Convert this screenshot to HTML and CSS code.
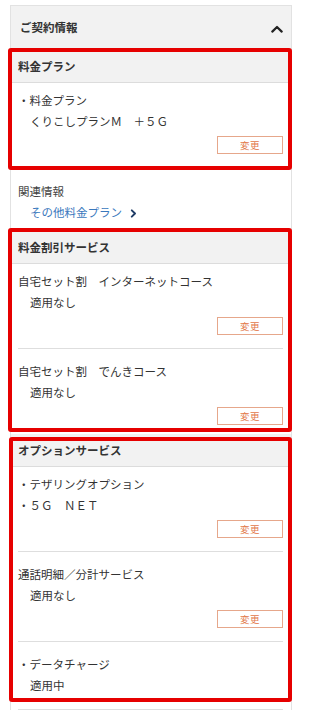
FILE: index.html
```html
<!DOCTYPE html>
<html lang="ja">
<head>
<meta charset="utf-8">
<meta name="viewport" content="width=301">
<title>ご契約情報</title>
<link rel="stylesheet" href="styles.css">
</head>
<body>
<div class="wrap">
  <div class="card">
    <div class="card-head">
      <span class="card-title">ご契約情報</span>
      <svg class="chev-up" width="12" height="8" viewBox="0 0 12 8"><path d="M1.3 6.6 L6 2 L10.7 6.6" fill="none" stroke="#222" stroke-width="2.2" stroke-linecap="round" stroke-linejoin="round"/></svg>
    </div>

    <div class="sec-head">料金プラン</div>
    <div class="item last">
      <p class="line">・料金プラン</p>
      <p class="line indent">くりこしプランＭ　＋５Ｇ</p>
      <div class="btn-row"><span class="btn">変更</span></div>
    </div>

    <div class="related">
      <p class="line rel-title">関連情報</p>
      <p class="line indent link">その他料金プラン<svg class="chev-r" width="7" height="9" viewBox="0 0 7 9"><path d="M1.8 1.3 L5 4.5 L1.8 7.7" fill="none" stroke="#1f3c66" stroke-width="1.9" stroke-linecap="round" stroke-linejoin="round"/></svg></p>
    </div>

    <div class="sec-head">料金割引サービス</div>
    <div class="item">
      <p class="line">自宅セット割　インターネットコース</p>
      <p class="line indent">適用なし</p>
      <div class="btn-row"><span class="btn">変更</span></div>
    </div>
    <div class="item last">
      <p class="line">自宅セット割　でんきコース</p>
      <p class="line indent">適用なし</p>
      <div class="btn-row"><span class="btn">変更</span></div>
    </div>

    <div class="sec-head">オプションサービス</div>
    <div class="item">
      <p class="line">・テザリングオプション</p>
      <p class="line">・５Ｇ　ＮＥＴ</p>
      <div class="btn-row"><span class="btn">変更</span></div>
    </div>
    <div class="item">
      <p class="line">通話明細／分計サービス</p>
      <p class="line indent">適用なし</p>
      <div class="btn-row"><span class="btn">変更</span></div>
    </div>
    <div class="item">
      <p class="line">・データチャージ</p>
      <p class="line indent">適用中</p>
    </div>
    <div class="item"></div>
  </div>

  <div class="mark mark-1"></div>
  <div class="mark mark-2"></div>
  <div class="mark mark-3"></div>
</div>
</body>
</html>
```

FILE: styles.css
```css
html, body {
  margin: 0;
  padding: 0;
  background: #ffffff;
}

body {
  font-family: "Noto Sans CJK JP", "Noto Sans", sans-serif;
  color: #333333;
  font-size: 11.5px;
  overflow: hidden;
}

.wrap {
  position: relative;
  width: 301px;
  padding-top: 5px;
  height: 705px;
  overflow: hidden;
}

.card {
  margin: 0 9px 0 10px;
  border: 1px solid #e2e2e2;
  border-bottom: none;
  background: #ffffff;
}

.card-head {
  display: flex;
  align-items: center;
  justify-content: space-between;
  background: #f2f2f2;
  padding: 13px 8px 15px 9px;
  line-height: 16px;
}

.card-title {
  font-weight: bold;
  font-size: 11.5px;
  color: #333333;
}

.chev-up {
  display: block;
  margin-top: 4px;
}

.sec-head {
  background: #f2f2f2;
  border-bottom: 1px solid #dcdcdc;
  padding: 8px 0 8px 7px;
  line-height: 16px;
  font-weight: bold;
  color: #333333;
}

.item {
  margin: 0 8px 0 7px;
  padding: 12px 0 13px;
}

.item + .item {
  border-top: 1px solid #dedede;
}

.sec-head + .item {
  padding-top: 7px;
}

.item.last {
  padding-bottom: 9px;
}

.line {
  margin: 0;
  line-height: 21px;
  white-space: nowrap;
}

.indent {
  padding-left: 12px;
}

.btn-row {
  display: flex;
  justify-content: flex-end;
  margin-top: 4px;
}

.btn {
  display: flex;
  align-items: center;
  justify-content: center;
  box-sizing: border-box;
  width: 66px;
  height: 18px;
  border: 1px solid #e6a78b;
  background: #ffffff;
  color: #e2774a;
  font-size: 9.5px;
  letter-spacing: 0.5px;
}

.related {
  padding: 18px 0 8px 7px;
}

.rel-title {
  color: #444444;
}

.link {
  display: flex;
  align-items: center;
  color: #3a78bd;
}

.chev-r {
  display: block;
  margin-left: 8px;
  margin-top: 1px;
}

.mark {
  position: absolute;
  box-sizing: border-box;
  border: 4px solid #e60000;
  border-radius: 3px;
  pointer-events: none;
}

.mark-1 {
  left: 8px;
  top: 48px;
  width: 284px;
  height: 122px;
}

.mark-2 {
  left: 8px;
  top: 228px;
  width: 284px;
  height: 204px;
}

.mark-3 {
  left: 9px;
  top: 437px;
  width: 283px;
  height: 265px;
}
```
